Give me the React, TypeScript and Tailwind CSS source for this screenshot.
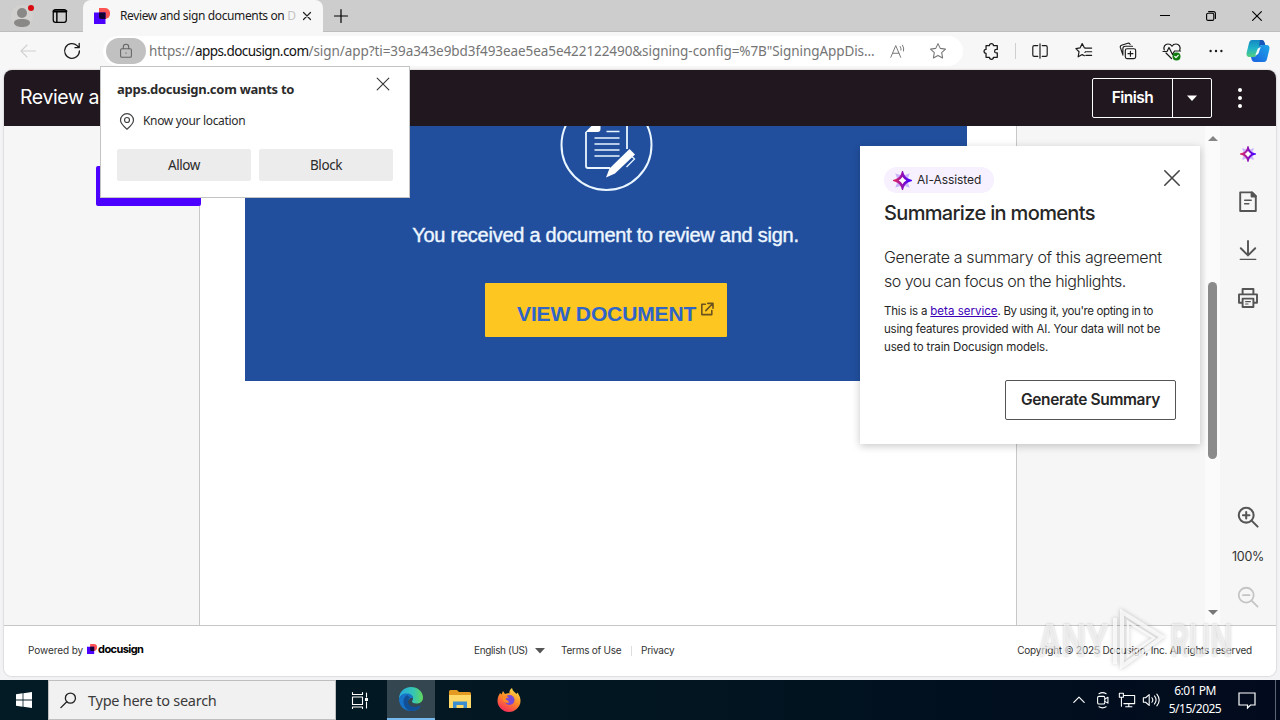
import type { ReactNode } from "react";

const uiFont = "font-['Noto_Sans','Open_Sans',sans-serif]";
const dsFont = "font-['Inter','Roboto',sans-serif]";

type IconProps = { size?: number; className?: string; stroke?: number; children: ReactNode };

function Icon({ size = 20, className = "", stroke = 1.2, children }: IconProps) {
  return (
    <svg
      width={size}
      height={size}
      viewBox="0 0 20 20"
      fill="none"
      stroke="currentColor"
      strokeWidth={stroke}
      strokeLinecap="round"
      strokeLinejoin="round"
      className={`shrink-0 ${className}`}
    >
      {children}
    </svg>
  );
}

function DocusignMark({ size }: { size: number }) {
  return (
    <svg width={size} height={size} viewBox="0 0 16 16" className="shrink-0">
      <path d="M5 0h6a5 5 0 0 1 5 5v1a5 5 0 0 1-5 5H5z" fill="#ff5252" />
      <path d="M0 4.500h11.500V16H0z" fill="#4c00ff" />
      <path d="M5 4.500h6.500V11H7a2 2 0 0 1-2-2z" fill="#130032" />
    </svg>
  );
}

function Sparkle({ size }: { size: number }) {
  return (
    <svg width={size} height={size} viewBox="0 0 18 18" className="shrink-0">
      <defs>
        <linearGradient id="spark" x1="0" x2="1">
          <stop offset="0" stopColor="#d6246e" />
          <stop offset="1" stopColor="#4c00ff" />
        </linearGradient>
      </defs>
      <path d="M3 3l4 1.500L4.500 7zM15 3l-4 1.500L13.500 7zM3 15l4-1.500L4.500 11zM15 15l-4-1.500 2.500-2.500z" fill="#cbb2ff" stroke="#cbb2ff" />
      <path
        d="M9 2.500c1 3.200 3.300 5.500 6.500 6.500-3.200 1-5.500 3.300-6.500 6.500-1-3.200-3.300-5.500-6.500-6.500 3.200-1 5.500-3.300 6.500-6.500z"
        fill="#fff"
        stroke="url(#spark)"
        strokeWidth="2.400"
      />
    </svg>
  );
}

function TabStrip() {
  return (
    <div className="flex h-8 shrink-0 border-b border-[#bdbdbd] bg-[#cdcdcd]">
      <div className="relative flex w-11 items-center justify-center">
        <svg width="24" height="24" viewBox="0 0 24 24">
          <circle cx="12" cy="12" r="11" fill="#d3d1d0" />
          <circle cx="12" cy="9" r="5" fill="#8a8886" />
          <path d="M4 19c0-3 3-4 8-4s8 1 8 4c-1 3-4 4-8 4s-7-1-8-4z" fill="#8a8886" />
        </svg>
        <span className="absolute top-[5px] left-7 size-1.5 rounded-full bg-[#d80b10]" />
      </div>
      <div className="flex w-[39px] items-center pl-[7px]">
        <Icon size={18} stroke={1.4} className="text-black">
          <rect x="2.500" y="3" width="14.500" height="14" rx="2.500" />
          <path d="M3 4.800h14" strokeWidth="2.400" />
          <path d="M6.500 6v11" strokeWidth="1.600" />
        </Icon>
      </div>
      <div className="flex h-8 w-[240px] items-center rounded-t-lg bg-[#f7f7f7] pl-[11px]">
        <DocusignMark size={16} />
        <div className="ml-[10px] w-[176px] text-[12px] tracking-[-0.37px] whitespace-nowrap text-[#1b1b1b]">
          Review and sign documents on <span className="text-[#c4c4c4]">D</span>
        </div>
        <Icon size={14} stroke={1.7} className="ml-1 text-[#222]">
          <path d="M5 5l10 10M15 5L5 15" />
        </Icon>
      </div>
      <div className="flex w-[35px] items-center justify-center">
        <Icon size={20} className="text-black">
          <path d="M10 3.500v13M3.500 10h13" />
        </Icon>
      </div>
      <div className="flex-1" />
      <div className="flex text-black">
        <div className="flex w-[46px] items-center justify-center">
          <span className="h-px w-2.5 bg-black" />
        </div>
        <div className="flex w-[46px] items-center justify-center">
          <Icon size={16} stroke={1.4}>
            <rect x="4.500" y="6.500" width="9" height="9" rx="1.800" />
            <path d="M7 4.500h6a2.500 2.500 0 0 1 2.500 2.500v6" />
          </Icon>
        </div>
        <div className="flex w-[46px] items-center justify-center">
          <Icon size={16} stroke={1.4}>
            <path d="M4.500 4.500l11 11M15.500 4.500l-11 11" />
          </Icon>
        </div>
      </div>
    </div>
  );
}

function Toolbar() {
  return (
    <div className="flex h-[38px] shrink-0 items-center bg-[#f7f7f7]">
      <div className="flex w-14 justify-center text-[#d0d0d0]">
        <Icon size={20} stroke={1.1}>
          <path d="M17.500 10H3M9 4l-6 6 6 6" />
        </Icon>
      </div>
      <div className="flex w-8 justify-center text-[#1b1b1b]">
        <Icon size={20} stroke={1.3}>
          <path d="M17.400 10a7.400 7.400 0 1 1-2.300-5.400L17 6.500M17.200 2.500v4.200H13" />
        </Icon>
      </div>
      <div className="ml-[15px] flex h-[30px] w-[860px] items-center rounded-full bg-white pl-[3px]">
        <div className="flex h-[26px] w-10 items-center justify-center rounded-full bg-[#c1c1c1] text-[#666]">
          <Icon size={18}>
            <rect x="4" y="7.500" width="12" height="9.500" rx="1.500" />
            <path d="M7 7.500V5.500a3 3 0 0 1 6 0v2M10 12v.5" />
          </Icon>
        </div>
        <div className="ml-[3px] w-[727px] text-[13.5px] tracking-[-0.07px] whitespace-nowrap text-[#757575]">
          https://<span className="tracking-[-0.56px] text-[#111]">apps.docusign.com</span>
          /sign/app?ti=39a343e9bd3f493eae5ea5e422122490&amp;signing-config=%7B"SigningAppDis...
        </div>
        <div className="flex w-[44px] shrink-0 justify-center text-[#777]">
          <Icon size={18} stroke={1.1}>
            <path d="M2 17L7.500 4 13 17M4 12.500h7M12.500 5a5 5 0 0 1 .8 4M15 3.500a8 8 0 0 1 1.200 6.500" />
          </Icon>
        </div>
        <div className="flex w-9 shrink-0 justify-center text-[#777]">
          <Icon size={18}>
            <path d="M10 1.800l2.500 5.300 5.800.8-4.200 4 1 5.800-5.100-2.800-5.100 2.800 1-5.800-4.200-4 5.800-.8z" />
          </Icon>
        </div>
      </div>
      <div className="flex items-center text-[#1b1b1b]">
        <div className="ml-1.5 flex w-11 justify-center">
          <Icon size={18} stroke={1.4}>
            <path d="M4.500 4h3.800a2.200 2.200 0 0 1 4.400 0H17v4.200h-1a2 2 0 0 0 0 4h1V17h-4.300a2.200 2.200 0 0 1-4.400 0H4.500v-4.400a2.200 2.200 0 0 1 0-4.400z" />
          </Icon>
        </div>
        <span className="ml-0.5 h-4 w-px bg-[#cfcfcf]" />
        <div className="ml-0.5 flex w-11 justify-center">
          <Icon size={18} stroke={1.3}>
            <path d="M7.500 4H3.500A1.500 1.500 0 0 0 2 5.500v9A1.500 1.500 0 0 0 3.500 16h4M12.500 4h4A1.500 1.500 0 0 1 18 5.500v9a1.500 1.500 0 0 1-1.500 1.500h-4M10 2v16" />
          </Icon>
        </div>
        <div className="flex w-11 justify-center">
          <Icon size={18} stroke={1.3}>
            <path d="M12 6.800h6.500M13 10.800h5.500M12 14.800h6.500M11.800 6.800L10.500 6.600 8 1.800 5.600 6.600l-4.600.7 3.500 3.500-1 5.700L8 14l2.500 1.200M11 11.500l1-.8" />
          </Icon>
        </div>
        <div className="flex w-11 justify-center">
          <Icon size={18} stroke={1.3}>
            <rect x="7" y="7.500" width="11.500" height="11" rx="2" />
            <path d="M12.700 10.300v5.400M10 13h5.400M4 13.500L1.500 6A2 2 0 0 1 2.800 3.600l7-2.200a2 2 0 0 1 2.500 1.200M4.300 14.500V7.500A2.800 2.800 0 0 1 7 4.700h8" />
          </Icon>
        </div>
        <div className="flex w-11 justify-center">
          <Icon size={20} stroke={1.2}>
            <path d="M2.300 9C1 6 3 3 6 3c2 0 3.300 1 4 2.200C10.700 4 12 3 14 3c3 0 5 3 3.700 6M4 12l5.500 5.500M1 10.500h4l2-4 3.500 7 2-3.500h6" />
            <circle cx="14.500" cy="15.500" r="4" fill="#107c10" stroke="none" />
            <path d="M12.800 15.500l1.200 1.200 2.200-2.400" stroke="#fff" />
          </Icon>
        </div>
        <div className="flex w-11 justify-center">
          <Icon size={18}>
            <g fill="currentColor" stroke="none">
              <circle cx="4" cy="10" r="1.300" />
              <circle cx="10" cy="10" r="1.300" />
              <circle cx="16" cy="10" r="1.300" />
            </g>
          </Icon>
        </div>
        <div className="flex w-10 justify-center">
          <svg width="24" height="24" viewBox="0 0 24 24">
            <defs>
              <linearGradient id="copA" x1="0" y1="0" x2="0" y2="1">
                <stop offset="0" stopColor="#1487c4" />
                <stop offset=".5" stopColor="#1fb3c8" />
                <stop offset="1" stopColor="#55cf7c" />
              </linearGradient>
              <linearGradient id="copB" x1="1" y1="0" x2="0" y2="1">
                <stop offset="0" stopColor="#1aa6e8" />
                <stop offset="1" stopColor="#1b5fe0" />
              </linearGradient>
            </defs>
            <path d="M6 1h9c2 0 3 1 3.500 3L19 6h-2c-2 0-3 1-3.600 3l-1.800 6c-.6 2-1.600 3-3.600 3H3.500C1 18 0 16 .7 13.500L3 4c.5-2 1.500-3 3-3z" fill="url(#copA)" />
            <path d="M14 1h1.500c2 0 2.700 1 3.200 3l.6 2H16c-2 0-2.600.5-3.200 2z" fill="#1556b8" />
            <path d="M18 23H9c-2 0-3-1-3.500-3L5 18h2.500c2 0 3-1 3.600-3l1.800-6c.6-2 1.600-3 3.600-3h4C23 6 24 8 23.300 10.500L21 20c-.5 2-1.500 3-3 3z" fill="url(#copB)" />
            <path d="M11.800 9.500l3-1.500-2.600 7-3 1.500z" fill="#f4fbff" />
          </svg>
        </div>
      </div>
    </div>
  );
}

function AppHeader() {
  return (
    <header className="flex h-14 shrink-0 items-center bg-[#21171e] pl-4 text-white">
      <span className="flex-1 text-[19.5px] tracking-[-0.4px] whitespace-nowrap">Review a</span>
      <div className="flex h-10 w-[120px] rounded-[2px] border border-white">
        <div className="flex flex-1 items-center justify-center border-r border-white text-[15.5px] font-semibold tracking-[-0.55px]">
          Finish
        </div>
        <div className="flex w-[38px] items-center justify-center">
          <svg width="10" height="6" viewBox="0 0 10 6">
            <path d="M0 .5h10L5 6z" fill="#fff" />
          </svg>
        </div>
      </div>
      <div className="flex w-16 flex-col items-center gap-1 pr-2">
        <span className="size-1 rounded-full bg-white" />
        <span className="size-1 rounded-full bg-white" />
        <span className="size-1 rounded-full bg-white" />
      </div>
    </header>
  );
}

function DocumentPage() {
  return (
    <div className="w-[818px] shrink-0 border-x border-[#c8c8c8] bg-white pl-[45px]">
      <div className="flex h-[255px] w-[722px] flex-col items-center bg-[#214f9e]">
        <svg width="94" height="66" viewBox="0 0 94 66" fill="none" stroke="#e9f6ff" className="ml-px shrink-0">
          <circle cx="46.500" cy="19" r="45" strokeWidth="2" />
          <path d="M67 0v23M26 6v34a2 2 0 0 0 2 2H50" strokeWidth="1.800" />
          <path d="M25.500 6l6-6h9v3c0 2-1 3-3 3z" fill="#fff" stroke="none" />
          <path d="M46.500 5.500h13M34.500 12h25M34.500 18h25M34.500 24h25M34.500 30h25" strokeWidth="1.300" />
          <path d="M46 51.500l3.500-9 20-19.500 5.500 5.500-20 19z" fill="#fff" stroke="none" />
          <path d="M71.500 30l3 3-8 8" strokeWidth="1.300" />
        </svg>
        <p className="mt-[29px] mr-[1px] font-['Liberation_Sans',Arial,sans-serif] text-[20px] leading-7 tracking-[-0.25px] whitespace-nowrap text-[#eef6ff] [-webkit-text-stroke:0.4px_#eef6ff]">
          You received a document to review and sign.
        </p>
        <div className="mt-[34px] flex h-[54px] w-[242px] shrink-0 rounded-[1px] bg-[#fdc620] pl-8">
          <span className="mt-[17px] font-['Liberation_Sans',Arial,sans-serif] text-[21px] leading-7 font-bold tracking-[-0.13px] whitespace-nowrap text-[#2f64c8]">
            VIEW DOCUMENT
          </span>
          <Icon size={16} stroke={2} className="mt-[18px] ml-[3px] text-[#6b531f]">
            <path d="M8 4H3.500v13H16v-5M11 3h6.500v6M17 3.500L8.500 12" />
          </Icon>
        </div>
      </div>
    </div>
  );
}

function Scrollbar() {
  return (
    <div className="flex w-[15px] flex-col items-center bg-[#fbfbfb]">
      <svg width="10" height="5" viewBox="0 0 10 5" className="mt-[10px]">
        <path d="M0 5L5 0l5 5z" fill="#858585" />
      </svg>
      <div className="mt-[141px] h-[177px] w-[9px] rounded-full bg-[#8b8b8b]" />
      <svg width="10" height="5" viewBox="0 0 10 5" className="mt-[151px]">
        <path d="M0 0h10L5 5z" fill="#777" />
      </svg>
    </div>
  );
}

function SideRail() {
  return (
    <div className="flex w-14 flex-col items-center bg-[#f6f6f6] text-[#555]">
      <div className="mt-[19px] flex h-[18px] items-center">
        <Sparkle size={16} />
      </div>
      <Icon size={24} stroke={1.6} className="mt-[27px]">
        <path d="M3.500 2h10l3 3v12.500h-13z" />
        <path d="M7.200 8.500h5.500M7.200 11.500h3.500" strokeWidth="1.200" />
        <path d="M13 2v3.500h3.500z" fill="currentColor" />
      </Icon>
      <Icon size={24} stroke={1.6} className="mt-6">
        <path d="M10 2.500v12M4 8.500l6 6 6-6" />
        <path d="M3.500 17.800h13" strokeWidth="1.100" />
      </Icon>
      <Icon size={24} stroke={1.6} className="mt-6">
        <path d="M5.500 6.500v-4h9v4M5 14H2.500V7h15v7H15" />
        <path d="M5.500 10.500h9v7h-9z" />
        <path d="M8 13h4M8 15h2" strokeWidth="1" />
      </Icon>
      <Icon size={24} stroke={1.7} className="mt-[195px]">
        <circle cx="8.500" cy="8.500" r="6.200" />
        <path d="M13 13l5 5M8.500 5.800v5.400M5.800 8.500h5.400" />
      </Icon>
      <span className="mt-[19px] text-[12.5px] leading-[18px] tracking-[-0.3px] text-[#333]">100%</span>
      <Icon size={24} stroke={1.5} className="mt-[19px] text-[#c4c4c4]">
        <circle cx="8.500" cy="8.500" r="6.200" />
        <path d="M13 13l5 5M5.800 8.500h5.400" />
      </Icon>
    </div>
  );
}

function AppFooter() {
  return (
    <footer className="flex h-[51px] shrink-0 border-t border-[#c6c6c6] bg-white pt-[15px] text-[10px] leading-[18px] text-[#333]">
      <div className="flex w-[470px] pl-6">
        <span className="tracking-[-0.08px]">Powered by</span>
        <div className="mt-px ml-1 flex h-3.5 items-center">
          <DocusignMark size={10} />
          <span className="ml-px text-[11px] font-bold tracking-[-0.6px] text-black">docusign</span>
        </div>
      </div>
      <div className="flex">
        <span className="w-[61px] tracking-[-0.35px] whitespace-nowrap">English (US)</span>
        <svg width="10" height="6" viewBox="0 0 10 6" className="mt-[7px]">
          <path d="M0 0h10L5 5.500z" fill="#555" />
        </svg>
        <span className="ml-4 w-[70px] tracking-[-0.26px]">Terms of Use</span>
        <span className="mt-[5px] h-2.5 w-px bg-[#ddd]" />
        <span className="ml-[9px] tracking-[-0.25px]">Privacy</span>
      </div>
      <span className="mr-6 ml-auto tracking-[-0.2px]">Copyright © 2025 Docusign, Inc. All rights reserved</span>
    </footer>
  );
}

function SummaryCard() {
  return (
    <div className="absolute top-[146px] left-[860px] h-[298px] w-[340px] bg-white px-6 text-[#262626] shadow-[0_2px_8px_rgba(0,0,0,0.22)]">
      <div className="flex items-start justify-between pt-5">
        <div className="mt-px flex h-[26px] w-[110px] items-center rounded-full bg-[#f6f0ff] pl-[9px] text-[12px] tracking-[-0.06px]">
          <Sparkle size={19} />
          <span className="ml-[5px]">AI-Assisted</span>
        </div>
        <Icon size={24} stroke={1.3} className="-mr-2 text-[#444]">
          <path d="M4 4l12 12M16 4L4 16" />
        </Icon>
      </div>
      <h2 className="mt-2 text-[20px] leading-6 font-medium tracking-[-0.66px]">Summarize in moments</h2>
      <p className="mt-5 text-[16px] leading-6 font-light tracking-[-0.34px] whitespace-nowrap">
        Generate a summary of this agreement
        <br />
        <span className="tracking-[-0.5px]">so you can focus on the highlights.</span>
      </p>
      <p className="mt-[9px] text-[11.5px] leading-[18px] tracking-[-0.18px] whitespace-nowrap">
        This is a <span className="tracking-[0.02px] text-[#3d00b8] underline">beta service</span>
        <span className="tracking-[-0.37px]">. By using it, you're opting in to</span>
        <br />
        using features provided with AI. Your data will not be
        <br />
        <span className="tracking-[-0.14px]">used to train Docusign models.</span>
      </p>
      <div className="mt-6 ml-auto flex h-10 w-[171px] items-center justify-center rounded-[2px] border border-[#555] text-[15.5px] font-semibold tracking-[-0.36px] whitespace-nowrap">
        Generate Summary
      </div>
    </div>
  );
}

function PermissionPopup() {
  return (
    <div className={`absolute top-[66px] left-[100px] z-20 h-[132px] w-[310px] border border-[#c4c4c4] bg-white px-4 text-[#2b2b2b] ${uiFont}`}>
      <div className="flex justify-between">
        <span className="mt-[13px] text-[13px] leading-[18px] font-bold tracking-[-0.27px] whitespace-nowrap">
          apps.docusign.com wants to
        </span>
        <Icon size={18} className="mt-2 mr-px text-[#333]">
          <path d="M3.500 3.500l13 13M16.500 3.500l-13 13" />
        </Icon>
      </div>
      <div className="mt-[13px] flex items-center text-[12px] leading-[18px] tracking-[-0.33px]">
        <Icon size={20} className="text-[#444]">
          <path d="M10 18.200c-3.800-3.300-6.500-5.700-6.500-9a6.500 6.500 0 0 1 13 0c0 3.300-2.700 5.700-6.500 9z" />
          <circle cx="10" cy="9" r="2.500" />
        </Icon>
        <span className="ml-[6px] whitespace-nowrap">Know your location</span>
      </div>
      <div className="mt-[18px] flex gap-2 text-[13.5px] tracking-[-0.4px]">
        <div className="flex h-8 w-[134px] items-center justify-center rounded-[2px] bg-[#ececec] pt-px">Allow</div>
        <div className="flex h-8 w-[134px] items-center justify-center rounded-[2px] bg-[#ececec] pt-px">Block</div>
      </div>
    </div>
  );
}

function Watermark() {
  return (
    <div className="pointer-events-none absolute top-[608px] left-[1038px] flex h-[64px] items-center text-[44px] leading-none font-bold text-white/60 [text-shadow:0_0_3px_rgba(0,0,0,0.22)]">
      <span className="w-[70px] origin-left scale-x-[0.72]">ANY</span>
      <svg width="58" height="64" viewBox="0 0 58 64" fill="none" stroke="#fff" strokeOpacity=".75" strokeWidth="4" className="drop-shadow-[0_0_2px_rgba(0,0,0,0.3)]">
        <path d="M7 56V10M14 58V4l40 25-38 28z" />
        <path d="M20 48V14l26 16z" strokeWidth="2.500" />
      </svg>
      <span className="ml-1 w-[64px] origin-left scale-x-[0.66]">RUN</span>
    </div>
  );
}

function Taskbar() {
  return (
    <div className={`flex h-10 shrink-0 bg-[linear-gradient(90deg,#031b24_0%,#021621_50%,#01101f_75%,#020b1d_100%)] text-white ${uiFont}`}>
      <div className="flex w-12 items-center justify-center">
        <svg width="16" height="16" viewBox="0 0 16 16" fill="#fff">
          <path d="M0 2.200L6.600 1.300v6.300H0zM7.400 1.200L16 0v7.600H7.400zM0 8.400h6.600v6.300L0 13.800zM7.400 8.400H16V16l-8.600-1.200z" />
        </svg>
      </div>
      <div className="flex w-72 items-center border border-[#bfbfbf] bg-[#f1f1f1] pl-[10px] text-[#3a3a3a]">
        <Icon size={19} stroke={1.4} className="text-[#222]">
          <circle cx="12" cy="7.500" r="5.300" />
          <path d="M8.200 11.300L2 17.500" />
        </Icon>
        <span className="mt-px ml-[10px] text-[14.5px] tracking-[-0.26px] whitespace-nowrap">Type here to search</span>
      </div>
      <div className="flex w-12 items-center justify-center">
        <Icon size={20} stroke={1.1}>
          <path d="M2.500 2.500v2h10v-2M2.500 7h10v7.500h-10zM2.500 18.500v-1.500h10v1.500M16.500 3v4M16.500 12v6" />
          <path d="M15.500 8.500h2v2h-2z" fill="currentColor" />
        </Icon>
      </div>
      <div className="ml-[3px] flex w-12 items-center justify-center border-b-2 border-[#76b9ed] bg-[#34464f]">
        <svg width="26" height="26" viewBox="0 0 26 26">
          <defs>
            <linearGradient id="edgeTop" x1="0" y1=".4" x2="1" y2=".4">
              <stop offset="0" stopColor="#25a8e0" />
              <stop offset=".6" stopColor="#35c5b4" />
              <stop offset="1" stopColor="#62d85c" />
            </linearGradient>
          </defs>
          <path d="M1 13C1 6 6 1 13 1s12 5 12 10.500c0 4-3 6-6.500 6-3 0-4.500-1-4.500-2 0-.8 1-1.300 1-3C15 9.500 12 8 9 8c-4 0-7 2-8 5z" fill="url(#edgeTop)" />
          <path d="M1 13c.8-3.500 4-5.500 8-5.500 3 0 6 1.800 6 5-1-1-5-.5-5 4 0 4 4 6.500 8 5.500l4.500-1.500C20.500 23.500 17 25 13 25 6 25 1 20 1 13z" fill="#1673c7" />
          <path d="M9 9c-3 2-4 5-3.300 8.500C6.500 21.500 9.500 24.500 13 25c4 0 7.500-1.500 9.500-4.500.3-.6-.3-1-.8-.7C16 22.500 10 20 10 15.500c0-2 .8-3.200 2-4z" fill="#115097" />
        </svg>
      </div>
      <div className="flex w-[49px] items-center justify-center">
        <svg width="22" height="20" viewBox="0 0 22 20">
          <path d="M0 1.500A1.500 1.500 0 0 1 1.500 0H8l2 2h10.500A1.500 1.500 0 0 1 22 3.500V18H0z" fill="#e39a22" />
          <path d="M0 5h22v13H0z" fill="#ffd867" />
          <path d="M4 18v-6.500h14V18h-3.500v-3h-7v3z" fill="#3a8ed0" />
        </svg>
      </div>
      <div className="flex w-[49px] items-center justify-center">
        <svg width="24" height="24" viewBox="0 0 24 24">
          <defs>
            <linearGradient id="fox" x1=".8" y1="0" x2=".3" y2="1">
              <stop offset="0" stopColor="#ffe14a" />
              <stop offset=".5" stopColor="#ff8a26" />
              <stop offset="1" stopColor="#f5285c" />
            </linearGradient>
          </defs>
          <path d="M3 5l1.500 1.500L6 3l2 3c1.500-.6 3-.8 4.500-.5C12 3 13.500 1 15 0c.5 3 3 4 4.500 6l1-1.500c2 3 3 5.500 3 8.500C23.500 19 18 24 12 24S.5 19 .5 13C.5 10 1.500 7.500 3 5z" fill="url(#fox)" />
          <circle cx="12.500" cy="12" r="5" fill="#7848d6" />
          <path d="M5 9c3-1.500 5-1 7 .5-2 0-3 .8-3.500 2 2 .5 3.500 1.500 3.500 3-3 1.500-6-.5-7-5.500z" fill="#ff8b24" />
        </svg>
      </div>
      <div className="flex-1" />
      <div className="flex w-6 items-center justify-center">
        <Icon size={16} stroke={1.5}>
          <path d="M3.500 13L10 6.500l6.500 6.500" />
        </Icon>
      </div>
      <div className="flex w-6 items-center justify-center">
        <Icon size={18} stroke={1.2}>
          <rect x="4" y="6" width="8" height="8.500" rx="1.500" />
          <path d="M12 9l3.500-2v6.500L12 11.500M5.500 3c2.500-1.500 5.500-1.500 8 0M5.500 17.500c2.500 1.500 5.500 1.500 8 0" />
        </Icon>
      </div>
      <div className="flex w-6 items-center justify-center">
        <Icon size={18} stroke={1.2}>
          <path d="M6 5h12.500v9H6.500M12 14v3.500M8.500 17.500h7M1.500 2.500h4.500v4.500h-4.500zM3.800 7v10" />
        </Icon>
      </div>
      <div className="flex w-6 items-center justify-center">
        <Icon size={18} stroke={1.2}>
          <path d="M1.500 7.500H4L8 4v12l-4-3.500H1.500zM11 7.500c1.200 1.500 1.200 3.500 0 5M13.800 5.500c2.300 2.800 2.300 6.200 0 9M16.500 3.500c3.200 4 3.200 9 0 13" />
        </Icon>
      </div>
      <div className="flex w-16 flex-col items-center text-[12px] leading-[18px] tracking-[-0.5px] whitespace-nowrap">
        <span className="mt-[2px]">6:01 PM</span>
        <span>5/15/2025</span>
      </div>
      <div className="flex w-10 items-center justify-center">
        <Icon size={20} stroke={1.2}>
          <path d="M2 3h16v12h-4.500l-3 3v-3H2z" strokeLinejoin="miter" />
        </Icon>
      </div>
      <div className="mr-1 ml-2 w-px bg-[#5d6670]" />
    </div>
  );
}

export default function App() {
  return (
    <div className={`relative flex h-[720px] w-[1280px] flex-col overflow-hidden bg-[#f3f3f5] ${uiFont}`}>
      <TabStrip />
      <Toolbar />
      <div className={`mx-1 mb-1 flex flex-1 flex-col overflow-hidden rounded-lg bg-white shadow-[0_0_2px_rgba(0,0,0,0.3)] ${dsFont}`}>
        <AppHeader />
        <main className="flex min-h-0 flex-1 bg-[#f6f6f6]">
          <div className="z-10 w-[195px] shrink-0 pt-10 pl-[92px]">
            <div className="-mr-0.5 h-10 rounded-[2px] bg-[#4c00ff]" />
          </div>
          <DocumentPage />
          <div className="flex-1" />
          <Scrollbar />
          <SideRail />
        </main>
        <AppFooter />
      </div>
      <Taskbar />
      <div className={dsFont}>
        <SummaryCard />
        <Watermark />
      </div>
      <PermissionPopup />
    </div>
  );
}
